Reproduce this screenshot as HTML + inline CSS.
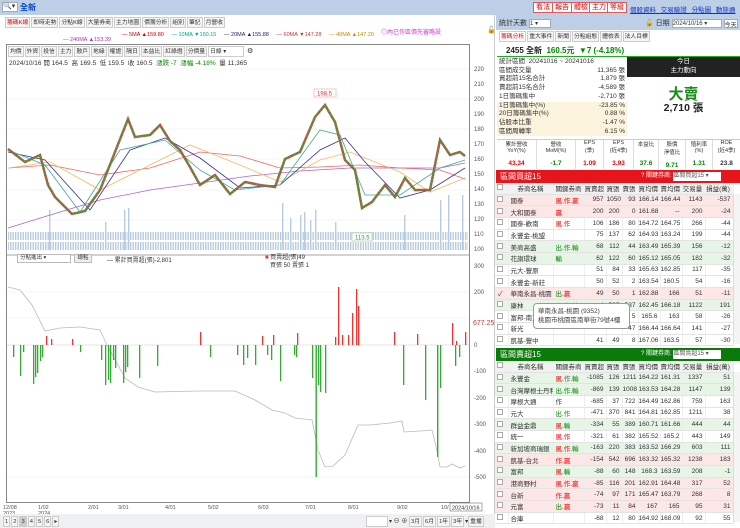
<!DOCTYPE html>
<html><head><meta charset="utf-8">
<style>
*{margin:0;padding:0;box-sizing:border-box}
body{width:740px;height:528px;overflow:hidden;background:#fff;font-family:"Liberation Sans","Noto Sans CJK TC",sans-serif;font-size:7px;color:#333;position:relative}
.a{position:absolute}
.btn{position:absolute;top:2px;height:11px;border:1px solid #e05a5a;background:#fff;color:#d00;font-size:7px;line-height:9px;padding:0 2px}
.tab{display:inline-block;border:1px solid #ccc;background:#f5f5f5;padding:0 1px;height:11px;line-height:10px;margin-right:1px;font-size:5.8px}
table{border-collapse:collapse;position:absolute;left:495px;width:238px;table-layout:fixed}
td{height:11.7px;border-bottom:1px solid #e3e3e3;border-right:1px solid #eee;font-size:6.5px;text-align:right;padding-right:2px;white-space:nowrap;overflow:hidden}
td:nth-child(2),td:nth-child(3){text-align:left;padding-left:2px}
td:first-child{text-align:center}
.hd td{background:#f1f1f1;text-align:center!important;height:11px}
.pk td{background:#fde6e6}.gn td{background:#e6f5e6}
.r{color:#e00}.g{color:#080}
.cb{display:inline-block;width:6px;height:6px;border:1px solid #aaa;background:#fff}
</style></head><body>
<!-- top bar -->
<div class="a" style="left:0;top:0;width:740px;height:15px;background:#bccfe6"></div>
<div class="a" style="left:2px;top:2px;width:16px;height:10px;background:#fff;border:1px solid #aaa;font-size:7px;line-height:8px">🔍▾</div>
<div class="a" style="left:20px;top:2px;color:#0044cc;font-size:8px;font-weight:bold">全新</div>
<div class="btn" style="left:533px">看法</div><div class="btn" style="left:552px">報告</div><div class="btn" style="left:571px">體檢</div><div class="btn" style="left:589px">主力</div><div class="btn" style="left:607px">等級</div>
<div class="a" style="left:630px;top:4px;color:#1133cc;text-decoration:underline;font-size:6.5px;word-spacing:3px">個股資料 交易驗證 分點圖 動態通知</div>
<div class="a" style="left:0;top:15px;width:495px;height:513px;background:#fff;border-right:1px solid #ccc"></div>
<!-- left tabs -->
<div class="a" style="left:5px;top:17px;white-space:nowrap"><span class="tab" style="color:#d00">籌碼K線</span><span class="tab">即時走勢</span><span class="tab">分點K線</span><span class="tab">大量券商</span><span class="tab">主力地圖</span><span class="tab">價籌分析</span><span class="tab">組別</span><span class="tab">筆記</span><span class="tab">月營收</span></div>
<div class="a" style="left:122px;top:32px;font-size:5.5px;white-space:nowrap"><span style="color:#c00">— 5MA ▲159.80</span>&nbsp;&nbsp;&nbsp;&nbsp;&nbsp;<span style="color:#0a8">— 10MA ▼160.15</span>&nbsp;&nbsp;&nbsp;&nbsp;&nbsp;<span style="color:#226">— 20MA ▲155.88</span>&nbsp;&nbsp;&nbsp;&nbsp;&nbsp;<span style="color:#c33">— 60MA ▼147.28</span>&nbsp;&nbsp;&nbsp;&nbsp;&nbsp;<span style="color:#cc8800">— 40MA ▲147.20</span></div>
<div class="a" style="left:63px;top:37px;font-size:5.5px;color:#a3a">— 240MA ▲153.39</div>
<div class="a" style="left:381px;top:27px;font-size:6px;color:#d3d">◎內已作區價先審略設</div>
<div class="a" style="left:487px;top:26px;font-size:7px">🔓</div>
<!-- chart frame -->
<div class="a" style="left:6px;top:44px;width:464px;height:459px;border:1px solid #888;background:#fff"></div>
<div class="a" style="left:8px;top:46px;white-space:nowrap"><span class="tab">均價</span><span class="tab">外資</span><span class="tab">投信</span><span class="tab">主力</span><span class="tab">散戶</span><span class="tab">地緣</span><span class="tab">權證</span><span class="tab">隔日</span><span class="tab">本益比</span><span class="tab">紅綠燈</span><span class="tab">分價量</span><span class="tab" style="width:36px;background:#fff">日線 ▾</span> ⚙</div>
<div class="a" style="left:9px;top:57px;font-size:6.5px;white-space:nowrap">2024/10/16 開 164.5 &nbsp;高 169.5 &nbsp;低 159.5 &nbsp;收 160.5 &nbsp;<span class="g">漲跌 -7 &nbsp;漲幅 -4.18%</span> &nbsp;量 11,365</div>
<svg class="a" style="left:0;top:0" width="495" height="528">
<g stroke="#eee" stroke-width="0.6"><line x1="7" y1="69" x2="469" y2="69"/><line x1="7" y1="99" x2="469" y2="99"/><line x1="7" y1="129" x2="469" y2="129"/><line x1="7" y1="159" x2="469" y2="159"/><line x1="7" y1="190" x2="469" y2="190"/><line x1="7" y1="220" x2="469" y2="220"/><line x1="7" y1="292" x2="469" y2="292"/><line x1="7" y1="318" x2="469" y2="318"/><line x1="7" y1="477" x2="469" y2="477"/></g>
<g font-size="6" fill="#555"><text x="474" y="71">220</text><text x="474" y="86">210</text><text x="474" y="101">200</text><text x="474" y="116">190</text><text x="474" y="131">180</text><text x="474" y="146">170</text><text x="474" y="161">160</text><text x="474" y="176">150</text><text x="474" y="191">140</text><text x="474" y="206">130</text><text x="474" y="221">120</text><text x="474" y="236">110</text><text x="474" y="251">100</text>
<text x="474" y="268">300</text><text x="474" y="294">200</text><text x="474" y="347">0</text><text x="474" y="373">-100</text><text x="474" y="400">-200</text><text x="474" y="426">-300</text><text x="474" y="453">-400</text><text x="474" y="479">-500</text></g>
<text x="473" y="325" font-size="7" fill="#c33">677.25</text>
<!-- volume -->
<defs><pattern id="vp" width="2.5" height="20" patternUnits="userSpaceOnUse"><rect x="0" y="2" width="1.4" height="20" fill="#b8cbe0"/></pattern></defs>
<rect x="8" y="232" width="460" height="18" fill="url(#vp)"/>
<g fill="#b8cbe0"><rect x="49" y="210" width="1.4" height="40"/><rect x="105" y="222" width="1.4" height="28"/><rect x="124" y="210" width="1.4" height="40"/><rect x="128" y="208" width="1.4" height="42"/><rect x="282" y="203" width="1.4" height="47"/><rect x="300" y="215" width="1.4" height="35"/><rect x="304" y="212" width="1.4" height="38"/><rect x="315" y="210" width="1.4" height="40"/><rect x="440" y="200" width="1.4" height="50"/><rect x="448" y="195" width="1.4" height="55"/><rect x="462" y="195" width="1.4" height="55"/><rect x="404" y="215" width="1.4" height="35"/><rect x="290" y="218" width="1.4" height="32"/><rect x="310" y="220" width="1.4" height="30"/><rect x="335" y="222" width="1.4" height="28"/></g>
<!-- MAs -->
<polyline fill="none" stroke="#a6c" stroke-width="0.8" points="8,228 60,212 100,200 150,190 200,183 250,176 300,171 350,168 400,168 440,168 465,163"/>
<polyline fill="none" stroke="#e66" stroke-width="0.8" points="8,168 50,165 100,175 150,168 200,152 240,156 280,168 320,167 360,165 400,168 440,170 465,179"/>
<polyline fill="none" stroke="#eb6" stroke-width="0.8" points="8,168 50,162 100,190 150,165 190,145 240,165 280,182 320,160 350,152 400,172 430,192 465,178"/>
<polyline fill="none" stroke="#339" stroke-width="0.8" points="8,152 45,160 90,210 130,150 165,138 200,158 240,188 280,185 320,150 345,138 365,162 400,198 430,190 465,168"/>
<polyline fill="none" stroke="#4a9" stroke-width="0.8" points="8,150 45,165 80,212 120,150 165,140 200,170 235,190 280,185 320,130 340,135 365,195 400,195 440,168 465,160"/>
<polyline fill="none" stroke="#d44" stroke-width="2.5" points="8,149 25,162 40,155 48,185 55,197 72,214 85,211 100,190 115,152 128,119 135,137 150,135 160,125 170,141 180,150 190,167 200,185 215,175 230,194 245,182 260,185 275,187 285,159 300,152 315,117 325,105 335,122 345,160 355,170 362,208 372,202 385,185 395,197 405,178 415,190 430,190 440,140 450,155 460,152 465,156" stroke-dasharray="3 3"/>
<polyline fill="none" stroke="#393" stroke-width="2.5" points="8,149 25,162 40,155 48,185 55,197 72,214 85,211 100,190 115,152 128,119 135,137 150,135 160,125 170,141 180,150 190,167 200,185 215,175 230,194 245,182 260,185 275,187 285,159 300,152 315,117 325,105 335,122 345,160 355,170 362,208 372,202 385,185 395,197 405,178 415,190 430,190 440,140 450,155 460,152 465,156" stroke-dasharray="3 3" stroke-dashoffset="3"/>
<rect x="314" y="89" width="22" height="8" fill="#fff" stroke="#f99" stroke-width="0.6"/><text x="317" y="95.5" font-size="6" fill="#d33">198.5</text>
<rect x="352" y="233" width="20" height="8" fill="#fff" stroke="#9c9" stroke-width="0.6"/><text x="355" y="239.5" font-size="6" fill="#393">113.5</text>
<line x1="7" y1="255" x2="469" y2="255" stroke="#888" stroke-width="0.8"/>
<!-- lower -->
<line x1="7" y1="345" x2="469" y2="345" stroke="#ccc" stroke-width="0.6"/>
<polyline fill="none" stroke="#bbb" stroke-width="0.8" points="8,287 20,290 32,305 45,331 60,328 80,327 100,330 107,345 125,378 138,387 155,392 200,391 235,391 255,400 272,410 285,413 295,418 312,420 318,450 325,467 333,466 345,455 358,425 370,425 390,423 402,421 404,432 420,431 432,430 436,446 440,467 447,467 452,464 460,468 465,466"/>
<g fill="#3a3"><rect x="13" y="345" width="1.3" height="12"/><rect x="20" y="345" width="1.3" height="31"/><rect x="23" y="345" width="1.3" height="7"/><rect x="33" y="345" width="1.3" height="39"/><rect x="35" y="345" width="1.3" height="32"/><rect x="37" y="345" width="1.3" height="28"/><rect x="40" y="345" width="1.3" height="16"/><rect x="42" y="345" width="1.3" height="12"/><rect x="80" y="345" width="1.3" height="7"/><rect x="101" y="345" width="1.3" height="15"/><rect x="105" y="345" width="1.3" height="40"/><rect x="108" y="345" width="1.3" height="35"/><rect x="110" y="345" width="1.3" height="38"/><rect x="113" y="345" width="1.3" height="15"/><rect x="115" y="345" width="1.3" height="23"/><rect x="123" y="345" width="1.3" height="38"/><rect x="125" y="345" width="1.3" height="27"/><rect x="127" y="345" width="1.3" height="22"/><rect x="139" y="345" width="1.3" height="33"/><rect x="157" y="345" width="1.3" height="21"/><rect x="210" y="345" width="1.3" height="12"/><rect x="237" y="345" width="1.3" height="10"/><rect x="243" y="345" width="1.3" height="20"/><rect x="247" y="345" width="1.3" height="13"/><rect x="255" y="345" width="1.3" height="20"/><rect x="267" y="345" width="1.3" height="10"/><rect x="271" y="345" width="1.3" height="15"/><rect x="280" y="345" width="1.3" height="36"/><rect x="294" y="345" width="1.3" height="10"/><rect x="296" y="345" width="1.3" height="12"/><rect x="312" y="345" width="1.3" height="33"/><rect x="315.5" y="345" width="1.4" height="132"/><rect x="318" y="345" width="1.3" height="40"/><rect x="320" y="345" width="1.3" height="47"/><rect x="325" y="345" width="1.3" height="48"/><rect x="403" y="345" width="1.3" height="40"/><rect x="425" y="345" width="1.3" height="55"/><rect x="437" y="345" width="1.4" height="112"/><rect x="440" y="345" width="1.3" height="43"/><rect x="455" y="345" width="1.3" height="21"/><rect x="459" y="345" width="1.3" height="12"/></g>
<g fill="#e33"><rect x="46" y="336" width="1.3" height="9"/><rect x="51" y="339" width="1.3" height="6"/><rect x="72" y="339" width="1.3" height="6"/><rect x="200" y="332" width="1.3" height="13"/><rect x="262" y="336" width="1.3" height="9"/><rect x="273" y="335" width="1.3" height="10"/><rect x="297" y="333" width="1.3" height="12"/><rect x="335" y="337" width="1.3" height="8"/><rect x="338" y="287" width="1.3" height="58"/><rect x="342" y="335" width="1.3" height="10"/><rect x="348" y="335" width="1.3" height="10"/><rect x="352" y="313" width="1.3" height="32"/><rect x="356" y="289" width="1.3" height="56"/><rect x="358" y="306" width="1.3" height="39"/><rect x="394" y="332" width="1.3" height="13"/><rect x="417" y="334" width="1.3" height="11"/><rect x="452" y="323" width="1.3" height="22"/><rect x="456" y="341" width="1.3" height="4"/><rect x="465" y="332" width="1.3" height="13"/></g>
<g font-size="5.5" fill="#555"><text x="3" y="509">12/08</text><text x="3" y="515">2023</text><text x="38" y="509">1/02</text><text x="38" y="515">2024</text><text x="88" y="509">2/01</text><text x="118" y="509">3/01</text><text x="165" y="509">4/01</text><text x="208" y="509">5/02</text><text x="258" y="509">6/03</text><text x="305" y="509">7/01</text><text x="348" y="509">8/01</text><text x="397" y="509">9/02</text><text x="441" y="509">10/</text></g>
<rect x="450" y="503" width="32" height="8" fill="#fff" stroke="#555" stroke-width="0.5"/><text x="452" y="509.5" font-size="5.5" fill="#333">2024/10/16</text>
</svg>
<div class="a" style="left:17px;top:254px;width:54px;height:9px;border:1px solid #bbb;background:#fff;font-size:5.5px;line-height:7px;padding-left:2px">分點進出 ▾</div>
<div class="a" style="left:74px;top:254px;width:18px;height:9px;border:1px solid #bbb;background:#eee;font-size:5.5px;line-height:7px;text-align:center">總點</div>
<div class="a" style="left:107px;top:255px;font-size:6px">— 累計買賣超(張)-2,801</div>
<div class="a" style="left:265px;top:255px;font-size:6px;line-height:7.5px"><span style="color:#e33">■</span> 買賣超(張)49<br>&nbsp;&nbsp;&nbsp;買張 50 賣張 1</div>
<div class="a" style="left:0;top:514px;width:495px;height:14px;background:#eef0f2"></div>
<div class="a" style="left:3px;top:516px;font-size:6px;white-space:nowrap"><span class="tab">1</span><span class="tab">2</span><span class="tab" style="background:#ccc">3</span><span class="tab">4</span><span class="tab">5</span><span class="tab">6</span><span class="tab">▸</span></div>
<div class="a" style="left:366px;top:516px;font-size:6px;white-space:nowrap"><span class="tab" style="width:22px;background:#fff">&nbsp;</span>▾ ⊖ ⊕ <span class="tab">3月</span><span class="tab">6月</span><span class="tab">1年</span><span class="tab">3年</span>▾<span class="tab">重播</span></div>

<!-- right panel -->
<div class="a" style="left:496px;top:15px;width:244px;height:15px;background:#bccfe6"></div>
<div class="a" style="left:499px;top:18px;font-size:7px">統計天數 <span style="display:inline-block;width:22px;height:9px;background:#fff;border:1px solid #aaa;font-size:6px;vertical-align:middle">1 ▾</span></div>
<div class="a" style="left:645px;top:18px;font-size:7px">🔓 日期 <span style="display:inline-block;width:50px;height:9px;background:#fff;border:1px solid #aaa;font-size:6px;vertical-align:middle">2024/10/16 ▾</span> <span style="display:inline-block;height:9px;background:#fff;border:1px solid #aaa;font-size:6px;vertical-align:middle">今天</span></div>
<div class="a" style="left:499px;top:31px;white-space:nowrap"><span class="tab" style="color:#d00;background:#fff">籌碼分析</span><span class="tab">重大事件</span><span class="tab">新聞</span><span class="tab">分點組態</span><span class="tab">體檢表</span><span class="tab">法人目標</span></div>
<div class="a" style="left:497px;top:43px;width:243px;height:14px;border-bottom:1px solid #2a2"></div>
<div class="a" style="left:506px;top:45px;font-size:8px;font-weight:bold;color:#222">2455 全新 &nbsp;<span class="g">160.5元 &nbsp;▼7 (-4.18%)</span></div>
<div class="a" style="left:497px;top:58px;width:130px;height:79px;font-size:6.5px;line-height:8.7px">
<div style="padding-left:2px">統計區間 &nbsp;20241016 ~ 20241016</div>
<div style="display:flex;justify-content:space-between;padding:0 2px"><span>區間成交量</span><span>11,365 張</span></div>
<div style="display:flex;justify-content:space-between;padding:0 2px"><span>買超前15名合計</span><span>1,879 張</span></div>
<div style="display:flex;justify-content:space-between;padding:0 2px"><span>賣超前15名合計</span><span>-4,589 張</span></div>
<div style="display:flex;justify-content:space-between;padding:0 2px"><span>1日籌碼集中</span><span>-2,710 張</span></div>
<div style="display:flex;justify-content:space-between;padding:0 2px;background:#fbf3dc"><span>1日籌碼集中(%)</span><span>-23.85 %</span></div>
<div style="display:flex;justify-content:space-between;padding:0 2px;background:#fbf3dc"><span>20日籌碼集中(%)</span><span>0.88 %</span></div>
<div style="display:flex;justify-content:space-between;padding:0 2px;background:#fbf3dc"><span>佔股本比重</span><span>-1.47 %</span></div>
<div style="display:flex;justify-content:space-between;padding:0 2px;background:#fbf3dc"><span>區間周轉率</span><span>6.15 %</span></div>
</div>
<div class="a" style="left:627px;top:57px;width:113px;height:20px;background:#222;color:#fff;font-size:6.5px;text-align:center;line-height:9px">今日<br>主力動向</div>
<div class="a" style="left:627px;top:83px;width:113px;text-align:center;color:#1a8a1a;font-size:15px;font-weight:bold">大賣</div>
<div class="a" style="left:627px;top:100px;width:113px;text-align:center;color:#222;font-size:10.5px;font-weight:bold">2,710 張</div>
<div class="a" style="left:497px;top:139px;width:243px;height:30px;border-top:1px solid #ccc;display:flex;font-size:5.5px;text-align:center">
<div style="width:40px;border-right:1px solid #ddd">累計營收<br>YoY(%)<br><br><b class="r" style="font-size:6.5px">43.34</b></div>
<div style="width:39px;border-right:1px solid #ddd">營收<br>MoM(%)<br><br><b class="g" style="font-size:6.5px">-1.7</b></div>
<div style="width:28px;border-right:1px solid #ddd">EPS<br>(季)<br><br><b class="r" style="font-size:6.5px">1.09</b></div>
<div style="width:30px;border-right:1px solid #ddd">EPS<br>(近4季)<br><br><b class="r" style="font-size:6.5px">3.93</b></div>
<div style="width:25px;border-right:1px solid #ddd">本益比<br><br><br><b class="g" style="font-size:6.5px">37.6</b></div>
<div style="width:27px;border-right:1px solid #ddd">股價<br>淨值比<br><br><b class="g" style="font-size:6.5px">9.71</b></div>
<div style="width:27px;border-right:1px solid #ddd">殖利率<br>(%)<br><br><b class="g" style="font-size:6.5px">1.31</b></div>
<div style="width:27px">ROE<br>(近4季)<br><br><b style="font-size:6.5px">23.8</b></div>
</div>
<!-- red table -->
<div class="a" style="left:496px;top:170px;width:244px;height:13px;background:#e8141c;color:#fff;font-size:8px;line-height:13px;padding-left:4px">區間買超15<span style="position:absolute;left:145px;font-size:6px">? 關鍵券商: <span style="display:inline-block;width:48px;height:9px;background:#fff;color:#555;line-height:9px">區間買超15 ▾</span></span></div>
<table style="top:183px"><colgroup><col style="width:13px"><col style="width:45px"><col style="width:31px"><col style="width:22px"><col style="width:16px"><col style="width:16px"><col style="width:22px"><col style="width:22px"><col style="width:23px"><col style="width:28px"></colgroup>
<tr class="hd"><td><span class="cb"></span></td><td>券商名稱</td><td>關鍵券商</td><td>買賣超</td><td>買張</td><td>賣張</td><td>買均價</td><td>賣均價</td><td>交易量</td><td>損益(萬)</td></tr>
<tr class="pk"><td><span class="cb"></span></td><td>國泰</td><td class="r">風.作.贏</td><td>957</td><td>1050</td><td>93</td><td>166.14</td><td>166.44</td><td>1143</td><td>-537</td></tr>
<tr class="pk"><td><span class="cb"></span></td><td>大和國泰</td><td class="r">贏</td><td>200</td><td>200</td><td>0</td><td>161.68</td><td>--</td><td>200</td><td>-24</td></tr>
<tr><td><span class="cb"></span></td><td>國泰-歡南</td><td class="r">風.作</td><td>106</td><td>186</td><td>80</td><td>164.72</td><td>164.75</td><td>266</td><td>-44</td></tr>
<tr><td><span class="cb"></span></td><td>永豐金-桃盟</td><td></td><td>75</td><td>137</td><td>62</td><td>164.93</td><td>163.24</td><td>199</td><td>-44</td></tr>
<tr class="gn"><td><span class="cb"></span></td><td>美商高盛</td><td class="g">出.作.輸</td><td>68</td><td>112</td><td>44</td><td>163.49</td><td>165.39</td><td>156</td><td>-12</td></tr>
<tr class="gn"><td><span class="cb"></span></td><td>花旗環球</td><td class="g">輸</td><td>62</td><td>122</td><td>60</td><td>165.12</td><td>165.05</td><td>182</td><td>-32</td></tr>
<tr><td><span class="cb"></span></td><td>元大-豐原</td><td></td><td>51</td><td>84</td><td>33</td><td>165.63</td><td>162.85</td><td>117</td><td>-35</td></tr>
<tr><td><span class="cb"></span></td><td>永豐金-新莊</td><td></td><td>50</td><td>52</td><td>2</td><td>163.54</td><td>160.5</td><td>54</td><td>-16</td></tr>
<tr class="pk"><td>✓</td><td>華南永昌-桃園</td><td class="g">出.<span class="r">贏</span></td><td>49</td><td>50</td><td>1</td><td>162.88</td><td>166</td><td>51</td><td>-11</td></tr>
<tr class="gn"><td><span class="cb"></span></td><td>康林</td><td class="g">出.作.輸</td><td>4</td><td>595</td><td>537</td><td>162.45</td><td>166.18</td><td>1122</td><td>191</td></tr>
<tr><td><span class="cb"></span></td><td>富邦-南京</td><td></td><td></td><td></td><td>5</td><td>165.6</td><td>163</td><td>58</td><td>-26</td></tr>
<tr><td><span class="cb"></span></td><td>新光</td><td></td><td></td><td></td><td>47</td><td>166.44</td><td>166.64</td><td>141</td><td>-27</td></tr>
<tr><td><span class="cb"></span></td><td>凱基-豐中</td><td></td><td>41</td><td>49</td><td>8</td><td>167.06</td><td>163.5</td><td>57</td><td>-30</td></tr>
</table>
<div class="a" style="left:533px;top:303px;width:97px;height:26px;background:#fff;border:1px solid #999;border-radius:4px;font-size:6.5px;line-height:9px;padding:3px 4px;color:#444">華南永昌-桃園 (9352)<br>桃園市桃園區南華街79號4樓</div>
<div class="a" style="left:733px;top:194px;width:7px;height:150px;background:#f4f4f4;border-left:1px solid #ddd"></div>
<!-- green table -->
<div class="a" style="left:496px;top:348px;width:244px;height:13px;background:#0a7a0a;color:#fff;font-size:8px;line-height:13px;padding-left:4px">區間賣超15<span style="position:absolute;left:145px;font-size:6px">? 關鍵券商: <span style="display:inline-block;width:48px;height:9px;background:#fff;color:#555;line-height:9px">區間賣超15 ▾</span></span></div>
<table style="top:361px"><colgroup><col style="width:13px"><col style="width:45px"><col style="width:31px"><col style="width:22px"><col style="width:16px"><col style="width:16px"><col style="width:22px"><col style="width:22px"><col style="width:23px"><col style="width:28px"></colgroup>
<tr class="hd"><td><span class="cb"></span></td><td>券商名稱</td><td>關鍵券商</td><td>買賣超</td><td>買張</td><td>賣張</td><td>買均價</td><td>賣均價</td><td>交易量</td><td>損益(萬)</td></tr>
<tr class="gn"><td><span class="cb"></span></td><td>永豐金</td><td class="r">風.<span style="color:#555">作</span>.<span class="g">輸</span></td><td>-1085</td><td>126</td><td>1211</td><td>164.22</td><td>161.31</td><td>1337</td><td>51</td></tr>
<tr class="gn"><td><span class="cb"></span></td><td>台灣摩根士丹利</td><td class="g">出.作.輸</td><td>-869</td><td>139</td><td>1008</td><td>163.53</td><td>164.28</td><td>1147</td><td>139</td></tr>
<tr><td><span class="cb"></span></td><td>摩根大通</td><td>作</td><td>-685</td><td>37</td><td>722</td><td>164.49</td><td>162.86</td><td>759</td><td>163</td></tr>
<tr><td><span class="cb"></span></td><td>元大</td><td class="g">出.作</td><td>-471</td><td>370</td><td>841</td><td>164.81</td><td>162.85</td><td>1211</td><td>38</td></tr>
<tr class="gn"><td><span class="cb"></span></td><td>群益金鼎</td><td class="r">風.<span class="g">輸</span></td><td>-334</td><td>55</td><td>389</td><td>160.71</td><td>161.66</td><td>444</td><td>44</td></tr>
<tr><td><span class="cb"></span></td><td>統一</td><td class="r">風.作</td><td>-321</td><td>61</td><td>382</td><td>165.52</td><td>165.2</td><td>443</td><td>149</td></tr>
<tr class="gn"><td><span class="cb"></span></td><td>新加坡商瑞銀</td><td class="r">風.作.<span class="g">輸</span></td><td>-163</td><td>220</td><td>383</td><td>163.52</td><td>166.29</td><td>603</td><td>111</td></tr>
<tr class="pk"><td><span class="cb"></span></td><td>凱基-台北</td><td class="r">作.贏</td><td>-154</td><td>542</td><td>696</td><td>163.32</td><td>165.32</td><td>1238</td><td>183</td></tr>
<tr class="gn"><td><span class="cb"></span></td><td>富邦</td><td class="r">風.<span class="g">輸</span></td><td>-88</td><td>60</td><td>148</td><td>168.3</td><td>163.59</td><td>208</td><td>-1</td></tr>
<tr class="pk"><td><span class="cb"></span></td><td>港商野村</td><td class="r">風.作.贏</td><td>-85</td><td>116</td><td>201</td><td>162.91</td><td>164.48</td><td>317</td><td>52</td></tr>
<tr class="pk"><td><span class="cb"></span></td><td>台新</td><td class="r">作.贏</td><td>-74</td><td>97</td><td>171</td><td>165.47</td><td>163.79</td><td>268</td><td>8</td></tr>
<tr class="pk"><td><span class="cb"></span></td><td>元富</td><td class="g">出.<span class="r">贏</span></td><td>-73</td><td>11</td><td>84</td><td>167</td><td>165</td><td>95</td><td>31</td></tr>
<tr><td><span class="cb"></span></td><td>合庫</td><td></td><td>-68</td><td>12</td><td>80</td><td>164.92</td><td>168.09</td><td>92</td><td>55</td></tr>
</table>
<div class="a" style="left:733px;top:372px;width:7px;height:150px;background:#f4f4f4;border-left:1px solid #ddd"></div>
</body></html>
